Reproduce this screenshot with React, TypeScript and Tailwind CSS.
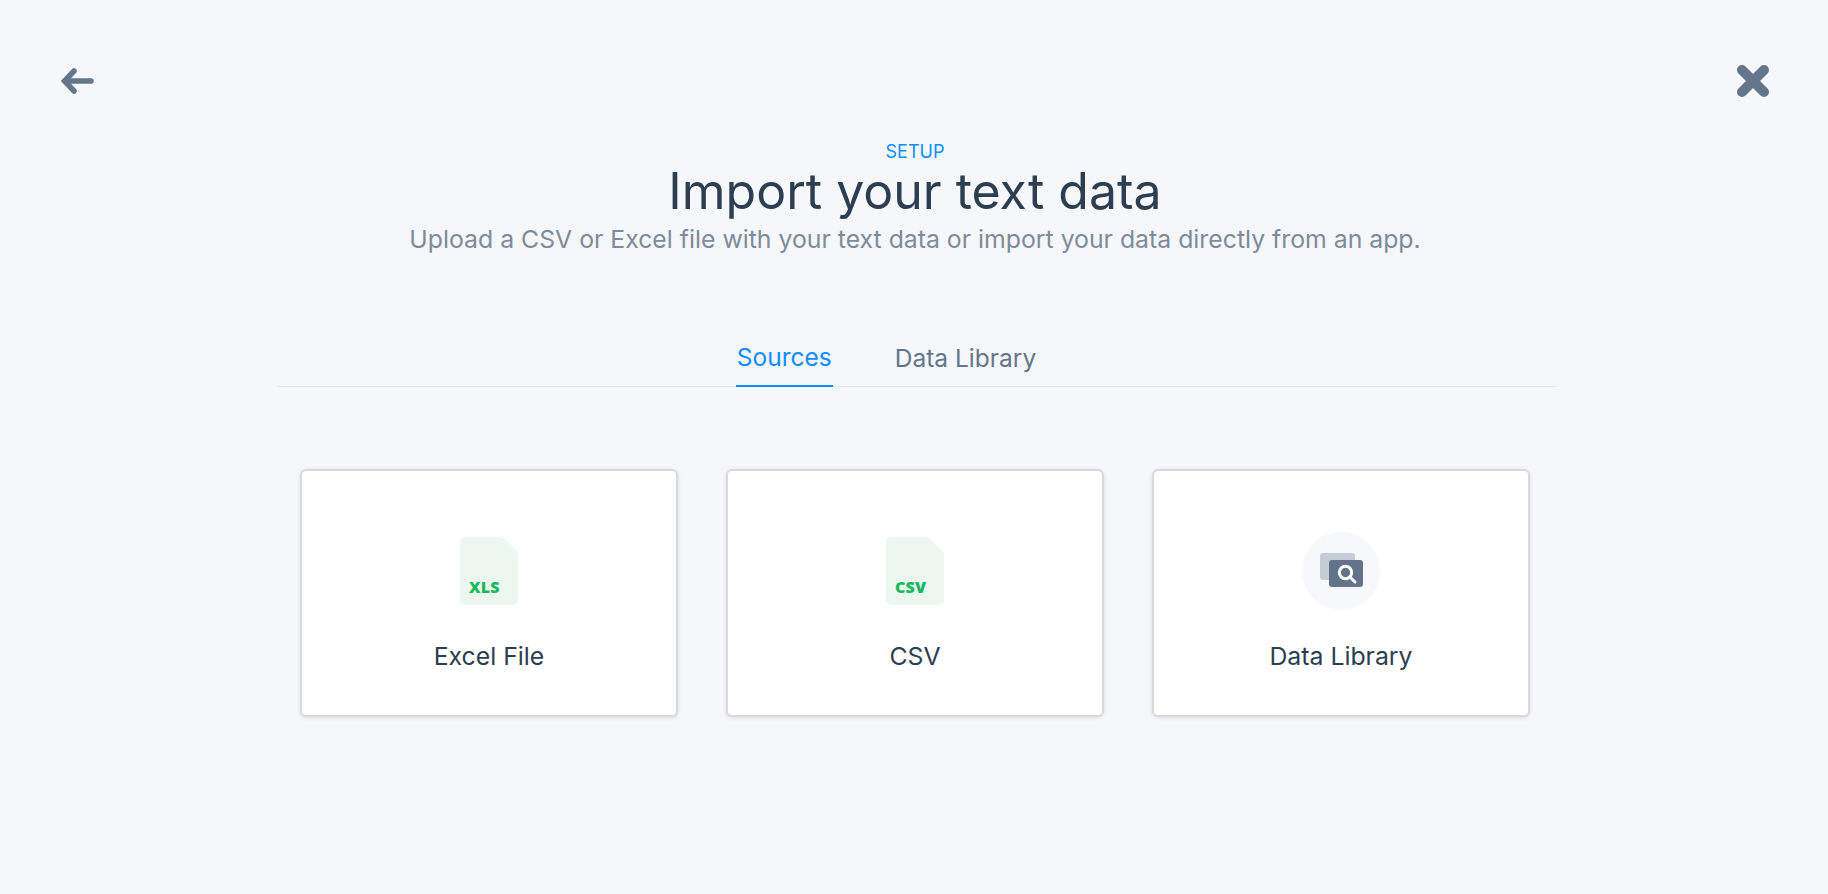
import { useState } from 'react';

const font = { fontFamily: 'Inter, "Noto Sans", sans-serif' };

function FileIcon({ label }: { label: string }) {
    return (
        <div className="relative h-[68px] w-[58px]">
            <svg width="58" height="68" viewBox="0 0 58 68" className="absolute inset-0">
                <path d="M5 0H42L58 16V63a5 5 0 0 1-5 5H5a5 5 0 0 1-5-5V5a5 5 0 0 1 5-5z" fill="#ecf7f0" />
            </svg>
            <span className="absolute bottom-[9px] left-[9px] font-['Open_Sans'] text-[16px] leading-[18px] font-extrabold tracking-[0.2px] text-[#17b85f]">
                {label}
            </span>
        </div>
    );
}

function LibraryIcon() {
    return (
        <svg width="78" height="78" viewBox="0 0 78 78">
            <circle cx="39" cy="39" r="39" fill="#f6f8fa" />
            <rect x="18" y="21" width="35" height="27" rx="3" fill="#c6ccd6" />
            <rect x="27" y="28" width="34" height="27" rx="3" fill="#65738a" />
            <circle cx="43.5" cy="40.5" r="6.2" fill="none" stroke="#fff" strokeWidth="3" />
            <path d="M48 45L53 50" stroke="#fff" strokeWidth="3" strokeLinecap="round" />
        </svg>
    );
}

const cards = [
    { name: 'Excel File', icon: <FileIcon label="XLS" /> },
    { name: 'CSV', icon: <FileIcon label="CSV" /> },
    { name: 'Data Library', icon: <LibraryIcon /> },
];

export default function App() {
    const [tab, setTab] = useState('Sources');

    return (
        <div className="min-h-[894px] bg-[#f5f7fb]" style={font}>
            {/* top bar */}
            <div className="flex items-center justify-between pt-[64px] pr-[58px] pl-[61px]">
                <button className="text-[#65768a]">
                    <svg width="34" height="28" viewBox="0 0 34 28" fill="none" stroke="currentColor" strokeWidth="5.5" strokeLinecap="round" strokeLinejoin="miter">
                        <path d="M13 4L3.5 14L13 24" />
                        <path d="M5 14H30" />
                    </svg>
                </button>
                <button className="text-[#65768a]">
                    <svg width="34" height="34" viewBox="0 0 34 34" fill="none" stroke="currentColor" strokeWidth="10" strokeLinecap="round">
                        <path d="M6 6L28 28M28 6L6 28" />
                    </svg>
                </button>
            </div>

            {/* heading */}
            <div className="mt-[43px] ml-[2px] flex flex-col items-center">
                <div className="text-[18px] leading-[22px] font-normal text-[#0a8dff]">SETUP</div>
                <h1 className="text-[50px] leading-[56px] font-normal text-[#2c3e50]">Import your text data</h1>
                <p className="mt-[5px] text-[24.8px] leading-[30px] text-[#7f8b9a]">
                    Upload a CSV or Excel file with your text data or import your data directly from an app.
                </p>
            </div>

            {/* tabs */}
            <div className="mt-[87px] ml-[277px] flex w-[1279px] justify-center gap-[61px] border-b border-[#e3e6eb] pr-[60px]">
                {['Sources', 'Data Library'].map((t) => (
                    <button
                        key={t}
                        onClick={() => setTab(t)}
                        className={
                            t === tab
                                ? '-mb-px border-b-2 border-[#0a8dff] px-px pb-[12px] text-[24.5px] leading-[32px] text-[#0a8dff]'
                                : '-mb-px px-px pb-[12px] text-[24.5px] leading-[32px] text-[#65768a]'
                        }
                    >
                        {t}
                    </button>
                ))}
            </div>

            {/* source cards */}
            <div className="mt-[82px] ml-[300px] flex gap-[48px]">
                {cards.map((c) => (
                    <div
                        key={c.name}
                        className="flex h-[248px] w-[378px] flex-col items-center rounded-[6px] border-2 border-[#d8d9db] bg-white pt-[61px] shadow-[0_1px_4px_rgba(0,0,0,0.1)]"
                    >
                        <div className="flex h-[78px] items-center">{c.icon}</div>
                        <div className="mt-[30px] text-[24.8px] leading-[32px] text-[#2c3e50]">{c.name}</div>
                    </div>
                ))}
            </div>
        </div>
    );
}
